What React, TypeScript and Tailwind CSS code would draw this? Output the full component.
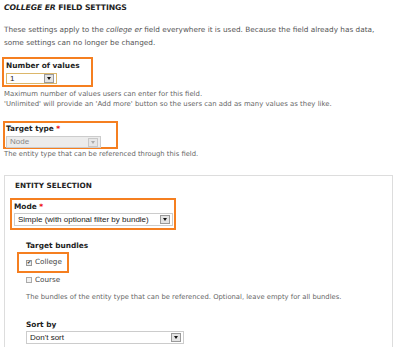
function Arrow({ dim = false }: { dim?: boolean }) {
  return (
    <span className={`flex items-center justify-center w-[10px] h-[9px] border ${dim ? 'border-[#c8c8c8] bg-[#e6e6e6]' : 'border-[#9a9a9a] bg-[#e4e4e4]'}`}>
      <span className={`block w-0 h-0 border-l-[2.5px] border-r-[2.5px] border-t-[3px] border-l-transparent border-r-transparent ${dim ? 'border-t-[#aaa]' : 'border-t-[#111]'}`} />
    </span>
  )
}

function Select({ value, className, dim = false }: { value: string; className: string; dim?: boolean }) {
  return (
    <div
      className={`flex items-center justify-between pl-[3px] pr-[2px] text-[8px] leading-none whitespace-nowrap ${className}`}
      style={{ fontFamily: '"Liberation Sans", Arial, sans-serif' }}
    >
      <span>{value}</span>
      <Arrow dim={dim} />
    </div>
  )
}

export default function App() {
  const font = { fontFamily: '"DejaVu Sans", Verdana, sans-serif' }
  return (
    <div className="w-[400px] h-[347px] bg-white overflow-hidden text-[#333]" style={font}>
      <div className="pl-[4px] pt-[3px] text-[7.7px] font-bold text-[#222] tracking-[-0.1px] leading-[10px]">
        <i>COLLEGE ER</i> FIELD SETTINGS
      </div>
      <p className="pl-[4px] mt-[10px] text-[7.3px] leading-[13px] text-[#555]">
        These settings apply to the <i>college er</i> field everywhere it is used. Because the field already has data,<br />
        some settings can no longer be changed.
      </p>

      <div className="ml-[2px] mt-[8px] w-[91px] h-[30px] border-2 border-[#f57f20] pl-[2px] pt-[2px]">
        <div className="text-[7.4px] font-bold text-[#222] leading-[10px]">Number of values</div>
        <Select value="1" className="w-[51px] h-[11px] mt-[2px] border border-[#dcb76a] bg-white text-[#222]" />
      </div>
      <div className="pl-[4px] pt-[2px] text-[6.9px] leading-[10px] text-[#666]">
        Maximum number of values users can enter for this field.<br />
        'Unlimited' will provide an 'Add more' button so the users can add as many values as they like.
      </div>

      <div className="ml-[3px] mt-[12px] w-[115px] h-[28px] border-2 border-[#f57f20] pl-[1px] pt-[1px]">
        <div className="text-[7.4px] font-bold text-[#222] leading-[10px]">
          Target type <span className="text-[#e00]">*</span>
        </div>
        <Select value="Node" dim className="w-[95px] h-[12px] mt-[2px] border border-[#ccc] bg-[#ececec] text-[#888]" />
      </div>
      <div className="pl-[4px] text-[6.8px] leading-[10px] text-[#666]">
        The entity type that can be referenced through this field.
      </div>

      <div className="ml-[4px] mt-[16px] w-[389px] h-[200px] border border-[#ddd] border-b-0 pl-[5px]">
        <div className="pl-[5px] pt-[5px] text-[7.3px] font-bold text-[#222] leading-[10px]">ENTITY SELECTION</div>
        <div className="mt-[7px] w-[166px] h-[32px] border-2 border-[#f57f20] pl-[2px] pt-[2px]">
          <div className="text-[7.4px] font-bold text-[#222] leading-[10px]">
            Mode <span className="text-[#e00]">*</span>
          </div>
          <Select value="Simple (with optional filter by bundle)" className="w-[159px] h-[13px] mt-[1px] border border-[#ccc] bg-white text-[#222]" />
        </div>

        <div className="pl-[16px] mt-[11px] text-[7.4px] font-bold text-[#222] leading-[10px]">Target bundles</div>
        <div className="ml-[7px] mt-[1px] w-[52px] h-[21px] border-2 border-[#f57f20] flex items-center pl-[7px] gap-[3px] text-[7.2px] text-[#444]">
          <span className="w-[6px] h-[6px] border border-[#999] bg-[#eee] flex items-center justify-center text-[5px] leading-none text-[#222]">✔</span>
          College
        </div>
        <div className="pl-[16px] mt-[2px] flex items-center gap-[3px] text-[7.2px] text-[#444] leading-[10px]">
          <span className="w-[6px] h-[6px] border border-[#aaa] bg-[#f2f2f2]" />
          Course
        </div>
        <div className="pl-[16px] mt-[7px] text-[6.8px] leading-[10px] text-[#666]">
          The bundles of the entity type that can be referenced. Optional, leave empty for all bundles.
        </div>

        <div className="pl-[16px] mt-[18px] text-[7.4px] font-bold text-[#222] leading-[10px]">Sort by</div>
        <div className="pl-[16px] mt-[1px]">
          <Select value="Don't sort" className="w-[158px] h-[13px] border border-[#ccc] bg-white text-[#222]" />
        </div>
      </div>
    </div>
  )
}
